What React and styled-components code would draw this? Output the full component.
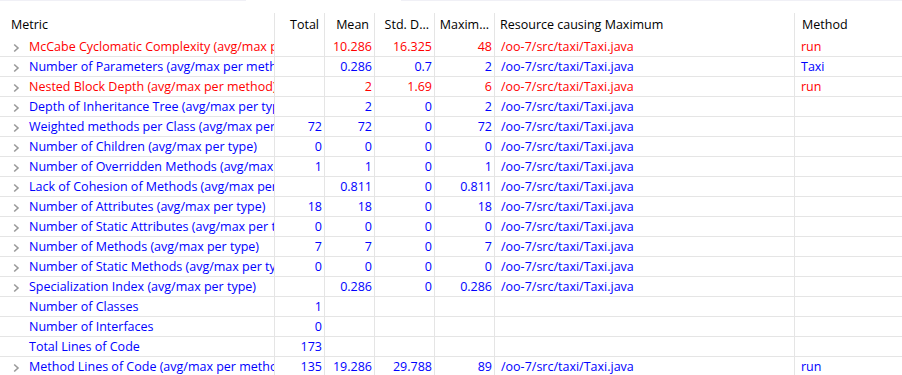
import styled, { createGlobalStyle } from "styled-components";

const GlobalStyle = createGlobalStyle`
  body {
    margin: 0;
    background: #fff;
    font-family: "Open Sans", "Noto Sans", sans-serif;
    font-size: 12.5px;
  }
`;

const RES = "/oo-7/src/taxi/Taxi.java";

const rows = [
  { name: "McCabe Cyclomatic Complexity (avg/max per method)", red: true, mean: "10.286", std: "16.325", max: "48", res: RES, method: "run", tree: true },
  { name: "Number of Parameters (avg/max per method)", mean: "0.286", std: "0.7", max: "2", res: RES, method: "Taxi", tree: true },
  { name: "Nested Block Depth (avg/max per method)", red: true, mean: "2", std: "1.69", max: "6", res: RES, method: "run", tree: true },
  { name: "Depth of Inheritance Tree (avg/max per type)", mean: "2", std: "0", max: "2", res: RES, tree: true },
  { name: "Weighted methods per Class (avg/max per type)", total: "72", mean: "72", std: "0", max: "72", res: RES, tree: true },
  { name: "Number of Children (avg/max per type)", total: "0", mean: "0", std: "0", max: "0", res: RES, tree: true },
  { name: "Number of Overridden Methods (avg/max per type)", total: "1", mean: "1", std: "0", max: "1", res: RES, tree: true },
  { name: "Lack of Cohesion of Methods (avg/max per type)", mean: "0.811", std: "0", max: "0.811", res: RES, tree: true },
  { name: "Number of Attributes (avg/max per type)", total: "18", mean: "18", std: "0", max: "18", res: RES, tree: true },
  { name: "Number of Static Attributes (avg/max per type)", total: "0", mean: "0", std: "0", max: "0", res: RES, tree: true },
  { name: "Number of Methods (avg/max per type)", total: "7", mean: "7", std: "0", max: "7", res: RES, tree: true },
  { name: "Number of Static Methods (avg/max per type)", total: "0", mean: "0", std: "0", max: "0", res: RES, tree: true },
  { name: "Specialization Index (avg/max per type)", mean: "0.286", std: "0", max: "0.286", res: RES, tree: true },
  { name: "Number of Classes", total: "1" },
  { name: "Number of Interfaces", total: "0" },
  { name: "Total Lines of Code", total: "173" },
  { name: "Method Lines of Code (avg/max per method)", total: "135", mean: "19.286", std: "29.788", max: "89", res: RES, method: "run", tree: true },
];

const Page = styled.div`
  width: 902px;
  height: 375px;
  overflow: hidden;
`;

const TopStrip = styled.div`
  display: flex;
  height: 13px;
`;

const TopEdge = styled.div`
  height: 0;
  border-top: 1px solid ${(p) => (p.$on ? "#f0f0f6" : "transparent")};
  width: ${(p) => p.$w || "auto"};
  flex: ${(p) => (p.$w ? "none" : "1")};
`;

const Grid = styled.div`
  display: grid;
  grid-template-columns: 275px 50px 50px 60px 60px 300px 1fr;
`;

const HeadCell = styled.div`
  height: 24px;
  line-height: 23px;
  padding: ${(p) => (p.$num ? "0 5px 0 0" : "0 0 0 " + (p.$pl || 7) + "px")};
  text-align: ${(p) => (p.$num ? "right" : "left")};
  color: #000;
  border-right: ${(p) => (p.$last ? "none" : "1px solid #e5e5e5")};
  white-space: nowrap;
  overflow: hidden;
  box-sizing: border-box;
`;

const Cell = styled.div`
  height: 20px;
  line-height: 19px;
  box-sizing: border-box;
  border-bottom: 1px solid #e5e5e5;
  border-right: ${(p) => (p.$last ? "none" : "1px solid #e5e5e5")};
  color: ${(p) => (p.$red ? "#ff0000" : "#0000ff")};
  text-align: ${(p) => (p.$num ? "right" : "left")};
  padding: ${(p) => (p.$num ? "0 2px 0 0" : "0 0 0 6px")};
  white-space: nowrap;
  overflow: hidden;
`;

const NameCell = styled(Cell)`
  display: flex;
  align-items: center;
  padding: 0;
`;

const Twisty = styled.span`
  width: 29px;
  flex: none;
  display: flex;
  align-items: center;
  padding-left: 13px;
  padding-top: 3px;
  box-sizing: border-box;
`;

const Chevron = () => (
  <svg width="7" height="10" viewBox="0 0 7 10">
    <polyline points="1.2,1.5 5,5 1.2,8.5" fill="none" stroke="#9a9a9a" strokeWidth="1.6" />
  </svg>
);

export default function App() {
  return (
    <Page>
      <GlobalStyle />
      <TopStrip>
        <TopEdge $on $w="246px" />
        <TopEdge $w="155px" />
        <TopEdge $on />
      </TopStrip>
      <Grid>
        <HeadCell $pl={11}>Metric</HeadCell>
        <HeadCell $num>Total</HeadCell>
        <HeadCell $num>Mean</HeadCell>
        <HeadCell $num>Std. D...</HeadCell>
        <HeadCell $num>Maxim...</HeadCell>
        <HeadCell $pl={5}>Resource causing Maximum</HeadCell>
        <HeadCell $pl={7} $last>Method</HeadCell>
        {rows.map((r) => (
          <Row key={r.name} r={r} />
        ))}
      </Grid>
    </Page>
  );
}

function Row({ r }) {
  return (
    <>
      <NameCell $red={r.red}>
        <Twisty>{r.tree && <Chevron />}</Twisty>
        {r.name}
      </NameCell>
      <Cell $red={r.red} $num>{r.total}</Cell>
      <Cell $red={r.red} $num>{r.mean}</Cell>
      <Cell $red={r.red} $num>{r.std}</Cell>
      <Cell $red={r.red} $num>{r.max}</Cell>
      <Cell $red={r.red}>{r.res}</Cell>
      <Cell $red={r.red} $last>{r.method}</Cell>
    </>
  );
}
